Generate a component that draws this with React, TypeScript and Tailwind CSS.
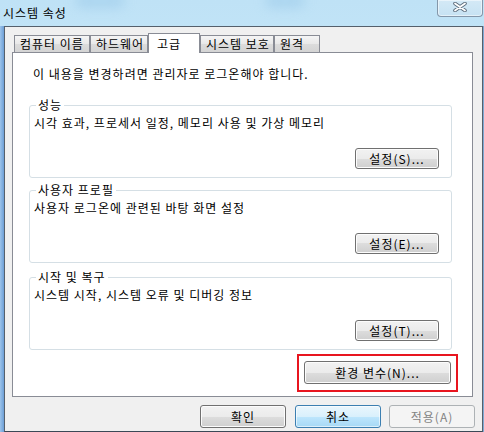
import React from "react";

const Btn = ({ label, className = "" }: { label: string; className?: string }) => (
  <div
    className={
      "flex items-center justify-center rounded-[3px] border border-[#707070] bg-[linear-gradient(180deg,#f2f2f2_0%,#ebebeb_50%,#dddddd_50%,#cfcfcf_100%)] shadow-[inset_0_0_0_1px_#fcfcfc] text-black " +
      className
    }
  >
    {label}
  </div>
);

const Group = ({ title, desc, btn, className = "" }: { title: string; desc: string; btn: string; className?: string }) => (
  <div className={"relative ml-[16px] flex h-[73px] w-[423px] flex-col rounded-[3px] border border-[#d5dfe5] pt-[9px] " + className}>
    <span className="absolute left-[6px] top-[-9px] bg-white px-[2px] leading-[16px]">{title}</span>
    <div className="pl-[4px] leading-[16px]">{desc}</div>
    <Btn label={btn} className="mt-auto mb-[8px] mr-[12px] h-[21px] w-[84px] self-end" />
  </div>
);

const Tab = ({ label, w, selected = false }: { label: string; w: string; selected?: boolean }) =>
  selected ? (
    <div className={"flex h-[20px] items-start border border-b-0 border-[#898c95] bg-white pl-[8px] pt-[2px] " + w}>{label}</div>
  ) : (
    <div className={"flex h-[18px] items-center border border-[#898c95] bg-[linear-gradient(180deg,#f5f5f5_0%,#e8e8e8_50%,#dcdcdc_50%,#d4d4d4_100%)] pl-[5px] " + w}>
      {label}
    </div>
  );

export default function App() {
  return (
    <div className="relative flex h-[432px] w-[484px] flex-col overflow-hidden bg-[linear-gradient(180deg,#bfe2f6_0%,#cdeefc_60%,#c8ebfa_100%)] font-['Noto_Sans_CJK_KR','Noto_Sans',sans-serif] text-[12px] leading-[16px] tracking-[1px] text-black">
      {/* glass blobs */}
      <div className="absolute left-[75px] top-[-6px] h-[14px] w-[50px] rounded-full bg-[#9ccbea] opacity-60 blur-[6px]" />
      <div className="absolute left-[265px] top-[-6px] h-[14px] w-[40px] rounded-full bg-[#9ccbea] opacity-60 blur-[6px]" />
      {/* title bar */}
      <div className="flex h-[26px] shrink-0 items-center pl-[3px] pb-[1px]">시스템 속성</div>
      {/* close button */}
      <div className="absolute right-[1px] top-0 flex h-[17px] w-[46px] items-start justify-center rounded-b-[4px] border border-t-0 border-[#8497aa] bg-[linear-gradient(180deg,#d4e9f6_0%,#c6e2f3_100%)] shadow-[inset_0_0_0_1px_rgba(255,255,255,0.5)] pt-[2px]">
        <svg width="14" height="10" viewBox="0 0 14 10">
          <path d="M2 1.5 L12 8.5 M12 1.5 L2 8.5" stroke="#5b6b7b" strokeWidth="3.6" strokeLinecap="round" />
          <path d="M2 1.5 L12 8.5 M12 1.5 L2 8.5" stroke="#ffffff" strokeWidth="1.8" strokeLinecap="round" />
        </svg>
      </div>
      {/* body */}
      <div className="flex min-h-0 flex-1">
        <div className="w-[4px] shrink-0 bg-[linear-gradient(90deg,#9cc3ea_0%,#6d9fd6_100%)]" />
        <div className="flex w-[479px] flex-col border border-[#55606c] border-b-[#3b4856] bg-[#f0f0f0]">
          {/* tabs */}
          <div className="relative z-10 mb-[-1px] ml-[9px] flex h-[26px] items-end">
            <Tab label="컴퓨터 이름" w="w-[76px]" />
            <Tab label="하드웨어" w="w-[58px]" />
            <Tab label="고급" w="w-[52px]" selected />
            <Tab label="시스템 보호" w="w-[74px]" />
            <Tab label="원격" w="w-[46px]" />
          </div>
          {/* panel */}
          <div className="ml-[7px] flex h-[345px] w-[461px] flex-col border border-[#898c95] bg-white">
            <div className="pl-[20px] pt-[13px]">이 내용을 변경하려면 관리자로 로그온해야 합니다.</div>
            <Group className="mt-[23px]" title="성능" desc="시각 효과, 프로세서 일정, 메모리 사용 및 가상 메모리" btn="설정(S)..." />
            <Group className="mt-[12px]" title="사용자 프로필" desc="사용자 로그온에 관련된 바탕 화면 설정" btn="설정(E)..." />
            <Group className="mt-[14px]" title="시작 및 복구" desc="시스템 시작, 시스템 오류 및 디버깅 정보" btn="설정(T)..." />
            <div className="mt-[4px] mr-[14px] flex justify-end">
              <div className="border-2 border-[#e8151f] px-[5px] pt-[5px] pb-[6px]">
                <Btn label="환경 변수(N)..." className="h-[23px] w-[147px]" />
              </div>
            </div>
          </div>
          {/* bottom buttons */}
          <div className="mt-[8px] flex justify-end pr-[7px]">
            <Btn label="확인" className="h-[23px] w-[86px]" />
            <div className="ml-[9px] flex h-[23px] w-[86px] items-center justify-center rounded-[3px] border border-[#3c7fb1] bg-[linear-gradient(180deg,#eaf6fd_0%,#d9f0fc_50%,#bee6fd_50%,#a7d9f5_100%)] shadow-[inset_0_0_0_1px_rgba(255,255,255,0.6)]">
              취소
            </div>
            <div className="ml-[8px] flex h-[23px] w-[86px] items-center justify-center rounded-[3px] border border-[#adb2b5] bg-[#f4f4f4] text-[#838383]">
              적용(A)
            </div>
          </div>
        </div>
        <div className="w-[1px] shrink-0 bg-[#7fa9d4]" />
      </div>
    </div>
  );
}
